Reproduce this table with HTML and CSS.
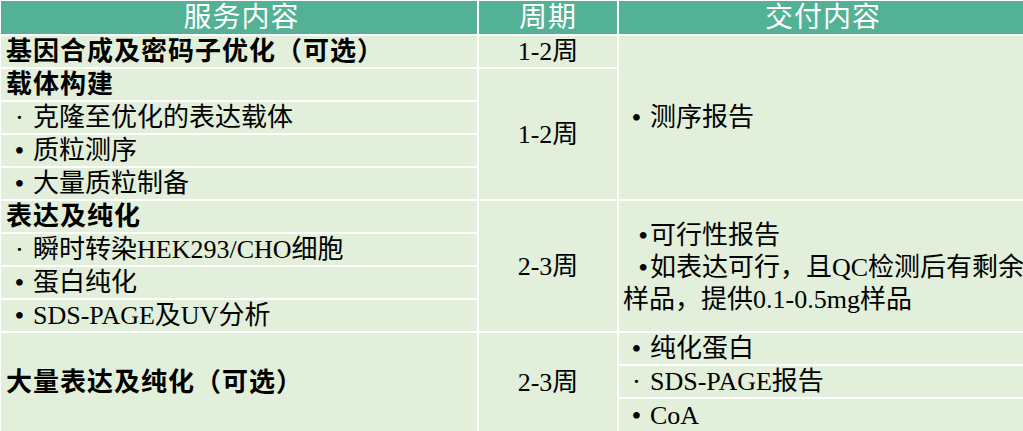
FILE: index.html
```html
<!DOCTYPE html>
<html lang="zh-CN">
<head>
<meta charset="utf-8">
<title>服务内容</title>
<link rel="stylesheet" href="styles.css">
</head>
<body>
<div class="sheet">
  <div class="hd c1">服务内容</div>
  <div class="hd c2">周期</div>
  <div class="hd c3">交付内容</div>

  <div class="cell c1 strong">基因合成及密码子优化（可选）</div>
  <div class="cell c2 mid">1-2周</div>
  <div class="cell c3 span5"><span class="bl">•</span>测序报告</div>

  <div class="cell c1 strong">载体构建</div>
  <div class="cell c2 mid span4">1-2周</div>
  <div class="cell c1"><span class="bs">·</span>克隆至优化的表达载体</div>
  <div class="cell c1"><span class="bl">•</span>质粒测序</div>
  <div class="cell c1"><span class="bl">•</span>大量质粒制备</div>

  <div class="cell c1 strong">表达及纯化</div>
  <div class="cell c2 mid span4">2-3周</div>
  <div class="cell c3 span4 stack">
    <div class="line"><span class="bl near">•</span>可行性报告</div>
    <div class="line"><span class="bl near">•</span>如表达可行，且QC检测后有剩余</div>
    <div class="line">样品，提供0.1-0.5mg样品</div>
  </div>
  <div class="cell c1"><span class="bs">·</span>瞬时转染HEK293/CHO细胞</div>
  <div class="cell c1"><span class="bl">•</span>蛋白纯化</div>
  <div class="cell c1"><span class="bl">•</span>SDS-PAGE及UV分析</div>

  <div class="cell c1 strong span3">大量表达及纯化（可选）</div>
  <div class="cell c2 mid span3">2-3周</div>
  <div class="cell c3"><span class="bl">•</span>纯化蛋白</div>
  <div class="cell c3"><span class="bs">·</span>SDS-PAGE报告</div>
  <div class="cell c3"><span class="bl">•</span>CoA</div>
</div>
</body>
</html>
```

FILE: styles.css
```css
html, body {
  margin: 0;
  padding: 0;
  background: #ffffff;
  overflow: hidden;
}

.sheet {
  display: grid;
  grid-template-columns: 476px 138px 404px;
  grid-template-rows: 33px repeat(11, 31px) 32px;
  gap: 2px;
  padding: 1px 0 0 1px;
  width: 1023px;
  height: 431px;
  box-sizing: border-box;
  background: #ffffff;
  font-family: "Liberation Serif", "Noto Sans CJK SC", serif;
  font-size: 26px;
  color: #000000;
}

.c1 { grid-column: 1; }
.c2 { grid-column: 2; }
.c3 { grid-column: 3; }
.span3 { grid-row: span 3; }
.span4 { grid-row: span 4; }
.span5 { grid-row: span 5; }

.hd {
  background: #53b295;
  color: #ffffff;
  font-family: "Liberation Sans", "Noto Sans CJK SC", sans-serif;
  font-size: 28px;
  line-height: 33px;
  display: flex;
  align-items: center;
  justify-content: center;
  white-space: nowrap;
  letter-spacing: 1px;
}

.cell {
  background: #e2efda;
  display: flex;
  align-items: center;
  line-height: 31px;
  white-space: nowrap;
  overflow: hidden;
}

.c1 { padding-left: 5px; }
.c3 { padding-left: 4px; }

.strong {
  font-weight: 700;
  letter-spacing: 1px;
}

.mid { justify-content: center; }

.stack {
  flex-direction: column;
  align-items: flex-start;
  justify-content: center;
  padding-top: 3px;
}

.line {
  line-height: 32px;
  display: flex;
  align-items: center;
}

.bl, .bs {
  display: inline-block;
  width: 27px;
  text-align: center;
  font-family: "Liberation Serif", serif;
  font-size: 28px;
  flex: none;
}

.bs { font-weight: 400; }

.bl.near {
  text-align: right;
  padding-right: 2px;
  box-sizing: border-box;
}
```
